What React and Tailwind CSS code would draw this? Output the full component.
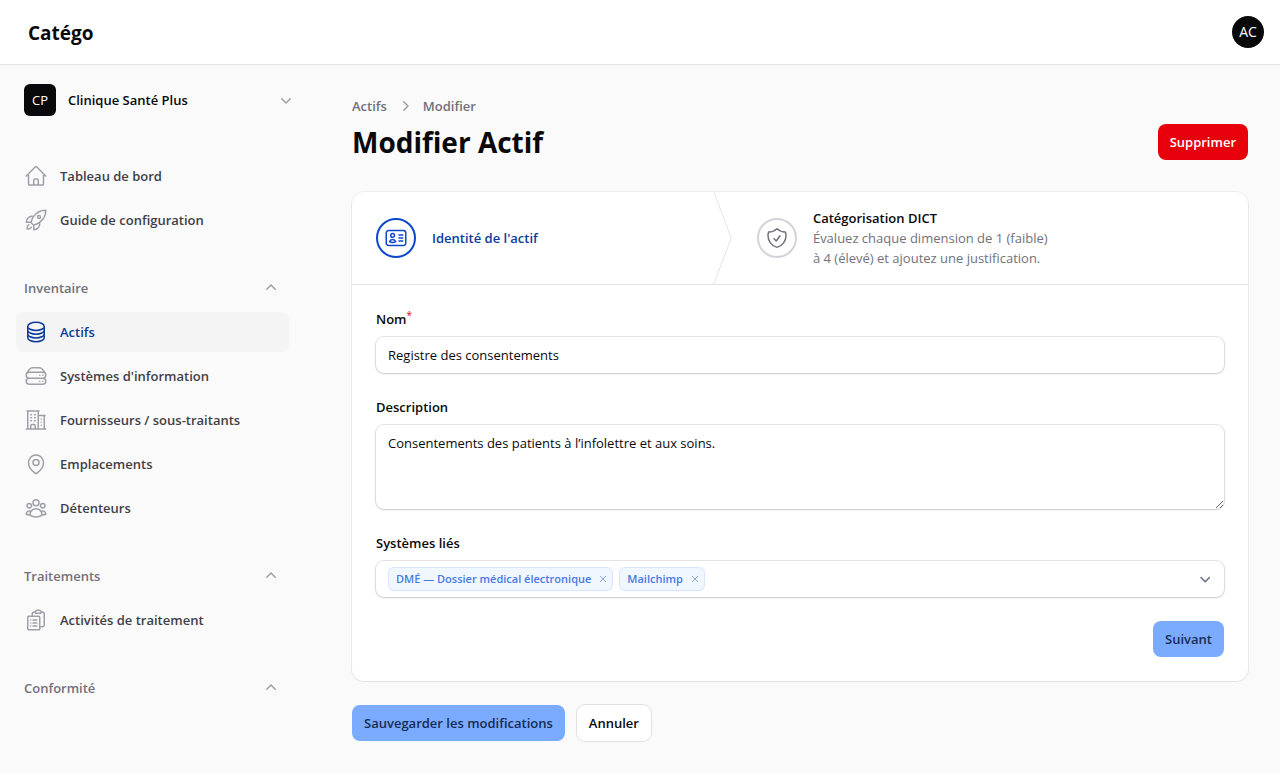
import React, { useState } from "react";
import {
  HiOutlineHome,
  HiOutlineRocketLaunch,
  HiOutlineCircleStack,
  HiOutlineServerStack,
  HiOutlineBuildingOffice2,
  HiOutlineMapPin,
  HiOutlineUserGroup,
  HiOutlineClipboardDocumentList,
  HiOutlineIdentification,
  HiOutlineShieldCheck,
  HiMiniChevronDown,
  HiMiniChevronUp,
  HiMiniChevronRight,
} from "react-icons/hi2";

const navGroups = [
  {
    items: [
      { label: "Tableau de bord", icon: HiOutlineHome },
      { label: "Guide de configuration", icon: HiOutlineRocketLaunch },
    ],
  },
  {
    title: "Inventaire",
    items: [
      { label: "Actifs", icon: HiOutlineCircleStack, active: true },
      { label: "Systèmes d'information", icon: HiOutlineServerStack },
      { label: "Fournisseurs / sous-traitants", icon: HiOutlineBuildingOffice2 },
      { label: "Emplacements", icon: HiOutlineMapPin },
      { label: "Détenteurs", icon: HiOutlineUserGroup },
    ],
  },
  {
    title: "Traitements",
    items: [
      { label: "Activités de traitement", icon: HiOutlineClipboardDocumentList },
    ],
  },
  { title: "Conformité", items: [] },
];

const fieldClass =
  "w-full rounded-lg bg-white shadow-sm ring-1 ring-zinc-950/10 outline-none focus-within:ring-2 focus-within:ring-blue-600";

const Topbar = () => (
  <header className="flex h-16 items-center justify-between bg-white pr-4 pl-7 shadow-xs ring-1 ring-zinc-950/5">
    <a href="#" className="pt-0.5 text-[19px] leading-7 font-bold">
      Catégo
    </a>
    <button
      type="button"
      aria-label="Menu utilisateur"
      className="size-8 rounded-full bg-zinc-950 text-[14px] text-white"
    >
      AC
    </button>
  </header>
);

const NavItem = ({ item }) => {
  const Icon = item.icon;
  return (
    <li>
      <a
        href="#"
        aria-current={item.active ? "page" : undefined}
        className={
          item.active
            ? "flex h-10 items-center gap-3 rounded-lg bg-zinc-100 px-2 text-[#0c3a9e]"
            : "flex h-10 items-center gap-3 rounded-lg px-2 text-zinc-700 hover:bg-zinc-100"
        }
      >
        <Icon
          className={item.active ? "size-6 text-[#0c3a9e]" : "size-6 text-zinc-400"}
        />
        {item.label}
      </a>
    </li>
  );
};

const NavGroup = ({ group }) => {
  const [open, setOpen] = useState(true);

  return (
    <li className="flex flex-col gap-1">
      {group.title && (
        <button
          type="button"
          aria-expanded={open}
          onClick={() => setOpen(!open)}
          className="flex h-10 items-center justify-between px-2 font-semibold text-zinc-500"
        >
          {group.title}
          <HiMiniChevronUp
            className={
              open ? "size-5 text-zinc-400" : "size-5 rotate-180 text-zinc-400"
            }
          />
        </button>
      )}
      {open && group.items.length > 0 && (
        <ul className="flex flex-col gap-1">
          {group.items.map((item) => (
            <NavItem key={item.label} item={item} />
          ))}
        </ul>
      )}
    </li>
  );
};

const Sidebar = () => (
  <aside className="w-80 shrink-0 pt-3 pl-4 font-semibold">
    <button
      type="button"
      className="flex w-full items-center gap-3 py-2 pr-6 pl-2 text-left"
    >
      <span className="flex size-8 items-center justify-center rounded-md bg-zinc-950 font-normal text-white">
        CP
      </span>
      <span className="flex-1">Clinique Santé Plus</span>
      <HiMiniChevronDown className="size-5 text-zinc-400" />
    </button>
    <nav className="pt-8 pr-[31px]">
      <ul className="flex flex-col gap-7">
        {navGroups.map((group, index) => (
          <NavGroup key={index} group={group} />
        ))}
      </ul>
    </nav>
  </aside>
);

const WizardHeader = () => (
  <ol className="flex border-b border-zinc-200">
    <li className="relative flex flex-auto">
      <button
        type="button"
        aria-current="step"
        className="flex items-center gap-4 px-6 py-4 text-left"
      >
        <span className="flex size-10 shrink-0 items-center justify-center rounded-full border-2 border-[#0c47d0]">
          <HiOutlineIdentification className="size-6 text-[#0c47d0]" />
        </span>
        <span className="font-semibold text-[#0c3a9e]">Identité de l'actif</span>
      </button>
      <svg
        aria-hidden="true"
        className="absolute top-0 right-0 h-full w-5 text-zinc-200"
        fill="none"
        preserveAspectRatio="none"
        viewBox="0 0 22 80"
      >
        <path
          d="M0 -2L20 40L0 82"
          stroke="currentColor"
          strokeLinejoin="round"
          vectorEffect="non-scaling-stroke"
        />
      </svg>
    </li>
    <li className="flex flex-auto">
      <button
        type="button"
        className="flex items-center gap-4 px-6 py-4 text-left"
      >
        <span className="flex size-10 shrink-0 items-center justify-center rounded-full border-2 border-zinc-300">
          <HiOutlineShieldCheck className="size-6 text-zinc-500" />
        </span>
        <span className="w-60">
          <span className="block font-semibold">Catégorisation DICT</span>
          <span className="block text-zinc-500">
            Évaluez chaque dimension de 1 (faible) à 4 (élevé) et ajoutez une
            justification.
          </span>
        </span>
      </button>
    </li>
  </ol>
);

const Tag = ({ label, onRemove }) => (
  <span className="flex h-6 items-center gap-1.5 rounded-md bg-[#f0f7ff] px-2 text-[11px] font-semibold text-[#457be3] ring-1 ring-blue-600/10 ring-inset">
    {label}
    <button
      type="button"
      aria-label={`Retirer ${label}`}
      onClick={onRemove}
      className="-mr-1 flex size-3 items-center justify-center text-[#8ba6dc]"
    >
      <svg viewBox="0 0 8 8" className="size-2" stroke="currentColor" fill="none">
        <path d="M1 1l6 6M7 1l-6 6" />
      </svg>
    </button>
  </span>
);

const AssetForm = () => {
  const [systems, setSystems] = useState([
    "DMÉ — Dossier médical électronique",
    "Mailchimp",
  ]);

  return (
    <div className="flex flex-col gap-6 p-6">
      <div className="flex flex-col gap-2">
        <label htmlFor="nom" className="font-semibold">
          Nom
          <sup className="text-[10px] leading-none font-medium text-red-600">*</sup>
        </label>
        <input
          id="nom"
          type="text"
          required
          defaultValue="Registre des consentements"
          className={`${fieldClass} h-9 px-3`}
        />
      </div>
      <div className="flex flex-col gap-2">
        <label htmlFor="description" className="font-semibold">
          Description
        </label>
        <textarea
          id="description"
          defaultValue="Consentements des patients à l’infolettre et aux soins."
          className={`${fieldClass} block h-[84px] resize-y px-3 py-2`}
        />
      </div>
      <div className="flex flex-col gap-2">
        <label htmlFor="systemes" className="font-semibold">
          Systèmes liés
        </label>
        <div className={`${fieldClass} flex min-h-9 items-center gap-1.5 px-3`}>
          {systems.map((name) => (
            <Tag
              key={name}
              label={name}
              onRemove={() => setSystems(systems.filter((s) => s !== name))}
            />
          ))}
          <input
            id="systemes"
            type="text"
            role="combobox"
            aria-expanded="false"
            className="min-w-0 flex-1 outline-none"
          />
          <svg
            aria-hidden="true"
            viewBox="0 0 21 21"
            className="-mr-1 size-[21px] text-gray-500"
            fill="none"
            stroke="currentColor"
            strokeWidth="1.6"
            strokeLinecap="round"
            strokeLinejoin="round"
          >
            <path d="M6 8.5l4.2 4.2 4.2-4.2" />
          </svg>
        </div>
      </div>
      <div className="flex justify-end">
        <button
          type="button"
          className="h-9 rounded-lg bg-[#7aabff] px-3 font-semibold text-[#172b54]"
        >
          Suivant
        </button>
      </div>
    </div>
  );
};

const App = () => (
  <div className="min-h-screen bg-zinc-50 font-['Open_Sans','Noto_Sans',sans-serif] text-[13px] leading-5 text-zinc-950">
    <Topbar />
    <div className="flex">
      <Sidebar />
      <main className="min-w-0 flex-1 px-8 py-8">
        <nav aria-label="Fil d'Ariane" className="mb-2">
          <ol className="flex items-center gap-2 font-semibold text-zinc-500">
            <li>
              <a href="#">Actifs</a>
            </li>
            <li className="flex items-center gap-2">
              <HiMiniChevronRight className="size-5 text-zinc-400" />
              <a href="#">Modifier</a>
            </li>
          </ol>
        </nav>
        <div className="flex items-center justify-between">
          <h1 className="text-[28px] leading-9 font-bold">Modifier Actif</h1>
          <button
            type="button"
            className="h-9 rounded-lg bg-red-600 px-3 font-semibold text-white"
          >
            Supprimer
          </button>
        </div>
        <form onSubmit={(e) => e.preventDefault()} className="mt-8">
          <section className="rounded-xl bg-white shadow-xs ring-1 ring-zinc-950/5">
            <WizardHeader />
            <AssetForm />
          </section>
          <div className="mt-6 flex gap-3">
            <button
              type="submit"
              className="h-9 rounded-lg bg-[#7aabff] px-3 font-semibold text-[#172b54]"
            >
              Sauvegarder les modifications
            </button>
            <button
              type="button"
              className="h-9 rounded-lg bg-white px-3 font-semibold ring-1 ring-zinc-950/10"
            >
              Annuler
            </button>
          </div>
        </form>
      </main>
    </div>
  </div>
);

export default App;
